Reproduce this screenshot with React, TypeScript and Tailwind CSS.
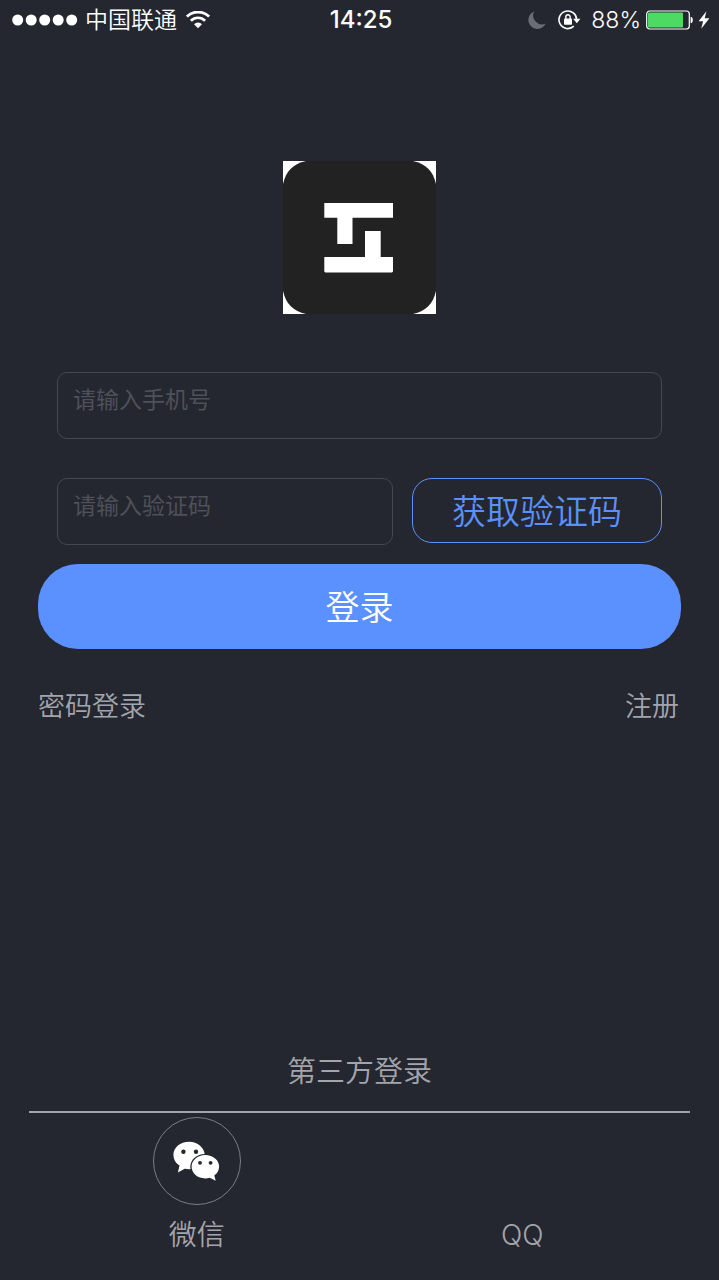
import React from "react";

function SignalDots() {
  return (
    <svg className="h-3 w-[66px]" viewBox="0 0 66 12" fill="#fff" aria-hidden="true">
      <circle cx="5.7" cy="6" r="5.5" />
      <circle cx="19.2" cy="6" r="5.5" />
      <circle cx="32.7" cy="6" r="5.5" />
      <circle cx="46.2" cy="6" r="5.5" />
      <circle cx="59.7" cy="6" r="5.5" />
    </svg>
  );
}

function WifiIcon() {
  return (
    <svg className="h-[18px] w-6" viewBox="0 0 24 18" fill="none" stroke="#fff" aria-hidden="true">
      <path d="M0.9 5.6A15.7 15.7 0 0 1 23.1 5.6" strokeWidth="2.8" />
      <path d="M4.9 9.7A10 10 0 0 1 19.1 9.7" strokeWidth="2.7" />
      <path d="M12 17.3L8 13.2A5.7 5.7 0 0 1 16 13.2Z" fill="#fff" stroke="none" />
    </svg>
  );
}

function MoonIcon() {
  return (
    <svg className="h-[18px] w-[18px]" viewBox="0 0 18 18" fill="#6b6d75" aria-hidden="true">
      <path d="M6.2 0.5A9 9 0 1 0 17.6 12.6A8.8 8.8 0 0 1 6.2 0.5Z" />
    </svg>
  );
}

function RotationLockIcon() {
  return (
    <svg className="h-5 w-[23px]" viewBox="0 0 23 20" fill="none" stroke="#fff" aria-hidden="true">
      <path d="M15.8 16.2A8.8 8.8 0 1 1 18.6 10" strokeWidth="1.6" />
      <path d="M15.2 8.8H22.4L18.8 13.2Z" fill="#fff" stroke="none" />
      <rect x="6" y="8.6" width="8" height="6.2" rx="0.8" fill="#fff" stroke="none" />
      <path d="M7.8 9V7.1a2.2 2.3 0 0 1 4.4 0V9" strokeWidth="1.4" />
    </svg>
  );
}

function BatteryIcon() {
  return (
    <svg className="h-5 w-[47px]" viewBox="0 0 47 20" fill="none" aria-hidden="true">
      <rect x="0.7" y="1" width="42.6" height="18" rx="3" stroke="#fff" strokeWidth="1.2" />
      <rect x="2" y="2.4" width="35" height="15.2" rx="1.2" fill="#4cd964" />
      <path d="M44.6 6.7c1.6 .3 2.2 1.6 2.2 3.3s-.6 3-2.2 3.3z" fill="#fff" />
    </svg>
  );
}

function BoltIcon() {
  return (
    <svg className="h-[18px] w-3" viewBox="0 0 12 18" fill="#fff" aria-hidden="true">
      <path d="M8.4 0.2L0.6 10.2H5.1L3.2 17.8L11.4 7.3H6.7Z" />
    </svg>
  );
}

function AppLogo() {
  return (
    <svg className="size-[153px]" viewBox="0 0 153 153" role="img" aria-label="Logo">
      <rect width="153" height="153" fill="#fff" />
      <path
        d="M23 0H130C143 3 150 10 153 23V130C150 143 143 150 130 153H23C10 150 3 143 0 130V23C3 10 10 3 23 0Z"
        fill="#222"
      />
      <path d="M41.3 42H110V56.8H69.5V83H54.3V56.8H41.3Z" fill="#fff" />
      <path d="M82 70H97.7V96H110V110.5L109 111.5H42.3L41.3 110.5V96H82Z" fill="#fff" />
    </svg>
  );
}

function WechatIcon() {
  return (
    <svg className="h-10 w-[47px]" viewBox="0 0 47 40" aria-hidden="true">
      <path
        d="M16 0.8C7.3 0.8 0.4 6.6 0.4 14c0 4.2 2.2 8 6.1 10.5L4.9 31.6l6.8-3.9c1.5.3 3 .5 4.6.5C25 28.2 31.8 22 31.8 14.4 31.6 6.7 24.7.8 16 .8Z"
        fill="#fff"
      />
      <path
        d="M32 12.9C23.8 12.9 17.3 18.5 17.3 25.8S23.8 38.7 32 38.7c8 0 14.5-5.6 14.5-12.9S40 12.9 32 12.9Z"
        fill="#24272f"
      />
      <path
        d="M32.2 14.1C24.6 14.1 18.6 19.3 18.6 25.8S24.6 37.4 32.2 37.4c1.7 0 3.1-.2 4.5-.6l6 3-1.4-5.2c3-2.2 4.8-5.3 4.8-8.9C46.1 19.3 40 14.1 32.2 14.1Z"
        fill="#fff"
      />
      <circle cx="10.4" cy="10.7" r="2.2" fill="#24272f" />
      <circle cx="23" cy="10.7" r="2.2" fill="#24272f" />
      <circle cx="27" cy="21.8" r="1.9" fill="#24272f" />
      <circle cx="37.6" cy="21.8" r="1.9" fill="#24272f" />
    </svg>
  );
}

function StatusBar() {
  return (
    <header className="grid h-10 grid-cols-[1fr_auto_1fr] items-center pr-[9px] pl-3 text-[23px] leading-8 text-white">
      <div className="flex items-center">
        <SignalDots />
        <span className="ml-[7px] font-[350]">中国联通</span>
        <span className="ml-[9px]">
          <WifiIcon />
        </span>
      </div>
      <time className="text-[24px] font-medium">14:25</time>
      <div className="flex items-center justify-end">
        <MoonIcon />
        <span className="ml-3">
          <RotationLockIcon />
        </span>
        <span className="ml-2.5 font-[350]">88%</span>
        <span className="ml-[5px]">
          <BatteryIcon />
        </span>
        <span className="ml-[5px]">
          <BoltIcon />
        </span>
      </div>
    </header>
  );
}

const fieldClass =
  "h-[67px] min-w-0 rounded-[10px] border border-[#464850] bg-transparent px-[15px] pb-3 text-[23px] text-white outline-none placeholder:text-[#4f5059]";

export default function App() {
  return (
    <div className="flex min-h-screen flex-col bg-[#24272f] font-['Inter','Noto_Sans_CJK_SC',sans-serif] text-[#a3a5ac]">
      <StatusBar />
      <main className="flex grow flex-col">
        <div className="mt-[121px] flex justify-center">
          <AppLogo />
        </div>

        <form className="mt-[58px] px-[38px]" onSubmit={(e) => e.preventDefault()}>
          <div className="flex flex-col gap-[39px] px-[19px]">
            <input type="tel" aria-label="手机号" placeholder="请输入手机号" className={fieldClass} />
            <div className="flex items-start gap-[19px]">
              <input
                type="text"
                inputMode="numeric"
                aria-label="验证码"
                placeholder="请输入验证码"
                className={`${fieldClass} flex-1`}
              />
              <button
                type="button"
                className="h-[65px] w-[250px] rounded-[20px] border border-[#5b91ff] pt-0.5 text-[34px] leading-10 font-[350] text-[#5b91ff]"
              >
                获取验证码
              </button>
            </div>
          </div>
          <button
            type="submit"
            className="mt-[19px] h-[85px] w-full rounded-[40px] bg-[#5b91ff] pt-0.5 text-[34px] leading-10 font-[350] text-white"
          >
            登录
          </button>
        </form>

        <nav className="mt-9 flex justify-between pr-10 pl-[38px] text-[27px] leading-11 font-[350]">
          <a href="#password">密码登录</a>
          <a href="#register">注册</a>
        </nav>

        <section className="mt-auto pb-[25px]">
          <h2 className="text-center text-[29px] leading-10 font-[350]">第三方登录</h2>
          <hr className="mx-[29px] mt-[19px] border-t-2 border-[#a3a3ae]" />
          <div className="mt-1 grid grid-cols-2 px-[34px] text-[28px] leading-10 font-[350]">
            <button type="button" className="flex flex-col items-center justify-end gap-2.5">
              <span className="flex size-[88px] items-center justify-center rounded-full border border-[#7c7e86]">
                <WechatIcon />
              </span>
              微信
            </button>
            <button type="button" className="flex flex-col items-center justify-end">
              QQ
            </button>
          </div>
        </section>
      </main>
    </div>
  );
}
